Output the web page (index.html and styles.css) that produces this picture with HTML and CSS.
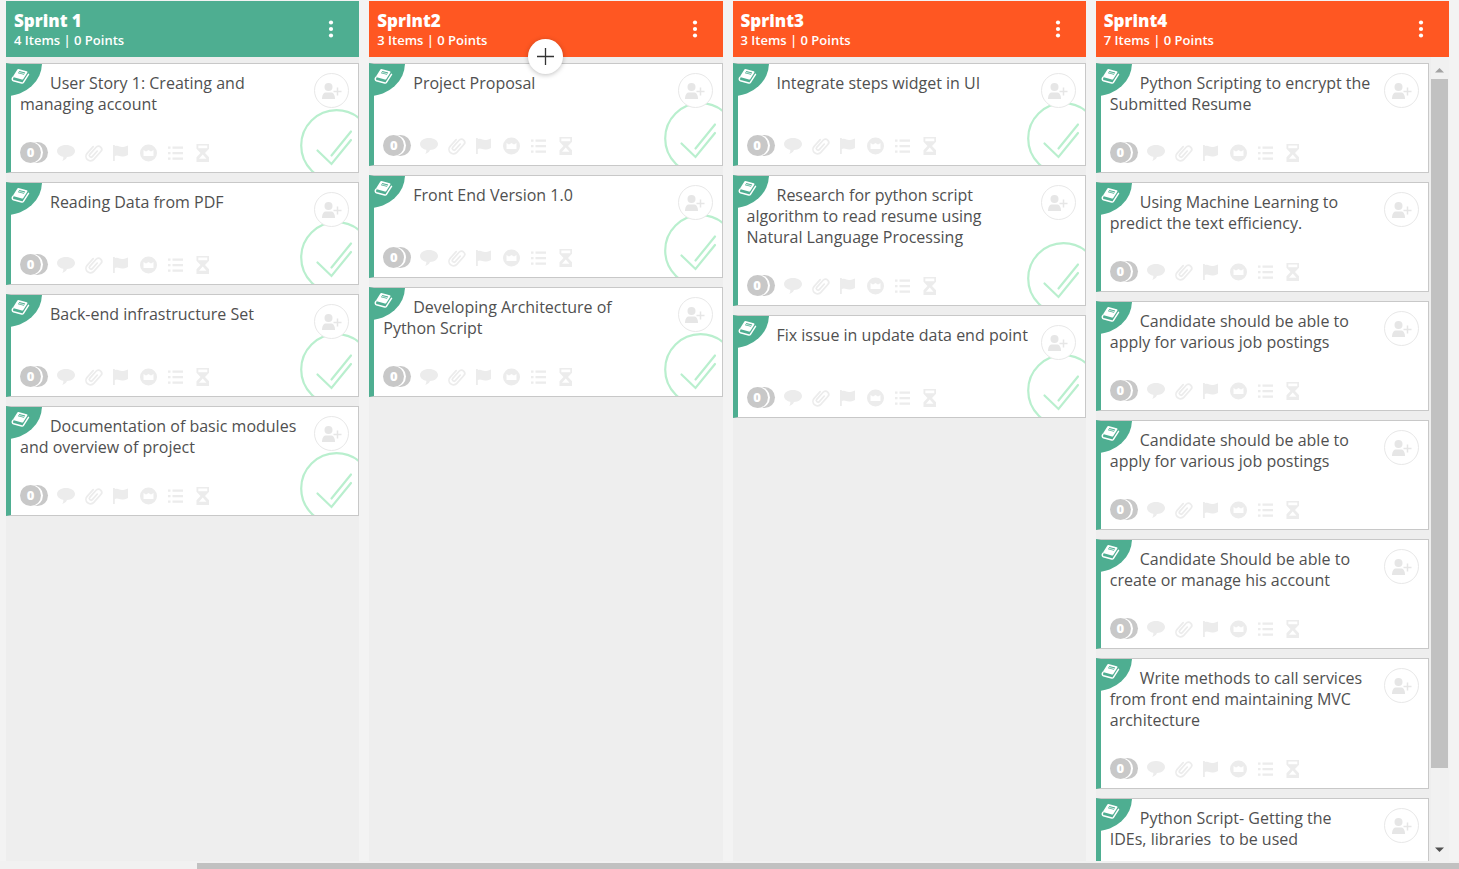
FILE: index.html
```html
<!DOCTYPE html>
<html lang="en">
<head>
<meta charset="utf-8">
<title>Sprint board</title>
<link rel="stylesheet" href="styles.css">
</head>
<body>
<svg class="defs" aria-hidden="true">
  <symbol id="book" viewBox="0 0 19 17">
    <path fill-rule="evenodd" d="M7.500 1 15.800 3.200Q17 3.600 16.300 4.700L12.300 11Q11.800 11.800 10.900 11.500L2.800 9.300Q1.600 8.900 2.300 7.900L6.200 1.700Q6.700.8 7.500 1zM8.300 3 7 5.200 12.900 6.800 14.200 4.600z" fill="#fff"/>
    <path d="M8 4.300 13.500 5.800" stroke="#fff" stroke-width=".7"/>
    <path d="M2 9.300C.8 10.500 1.200 12.400 2.400 12.800L10.800 15Q11.800 15.300 12.400 14.400L17.500 6.300" fill="none" stroke="#fff" stroke-width="1.500" stroke-linejoin="round" stroke-linecap="round"/>
  </symbol>
  <symbol id="dots" viewBox="0 0 6 18">
    <circle cx="3" cy="2.5" r="2.1"/><circle cx="3" cy="9" r="2.1"/><circle cx="3" cy="15.5" r="2.1"/>
  </symbol>
  <symbol id="member" viewBox="0 0 20 16">
    <circle cx="6.500" cy="4" r="4"/>
    <path d="M0 16c0-4.600 2-6.500 4-6.500h5c2 0 4 1.900 4 6.500z"/>
    <path d="M15.500 4.500v8M11.500 8.500h8" fill="none" stroke="currentColor" stroke-width="1.500"/>
  </symbol>
  <symbol id="tick" viewBox="0 0 73 73">
    <g fill="none" stroke="#b9efce" stroke-width="2.200" stroke-linecap="round">
      <circle cx="36.500" cy="36.500" r="35.300"/>
      <path d="M17.500 41.500 31.500 55 51 31M31.500 46.500 51 22.500"/>
    </g>
  </symbol>
  <symbol id="tools" viewBox="0 0 155 18">
    <path d="M9 1c5 0 9 2.600 9 6s-3.500 5.800-8 6c-.8 2-2.600 3.400-4.800 3.900.9-1.200 1.300-2.600 1.100-4.100C2.500 12 0 9.800 0 7c0-3.400 4-6 9-6z"/>
    <g transform="rotate(42 36.500 9)" fill="none" stroke="currentColor" stroke-width="1.700" stroke-linecap="round">
      <path d="M32 4.500V13.500a4.500 4.500 0 0 0 9 0V3a3.200 3.200 0 0 0-6.400 0V12.500a1.700 1.700 0 0 0 3.400 0V5"/>
    </g>
    <path d="M56 1h1.800v1.200c3-1.300 4.800.9 7 .9 1.800 0 3.200-.6 6.200-1.600v9.400c-2.500 1.100-4.300 1.700-6.200 1.600-2.600-.2-4.400-2-7-.5v5H56z"/>
    <path fill-rule="evenodd" d="M91.500.5a8.500 8.500 0 1 1 0 17 8.500 8.500 0 0 1 0-17zM86.500 6v6h10V6L94 7.600 91.500 6 89 7.600z"/>
    <path d="M111 2.500h2.500v2.200H111zm0 5.500h2.500v2.200H111zm0 5.500h2.500v2.200H111zm4.500-11H126v2.200h-10.500zm0 5.500H126v2.200h-10.500zm0 5.500H126v2.200h-10.500z"/>
    <path fill-rule="evenodd" d="M139.500 0h12.500v4.700L148 9l4 4.300V18h-12.500v-4.700L143.500 9l-4-4.300zM141.300 1.600v2.600h9V1.600zM145.700 10.500l-3.700 4.200h7.500z"/>
  </symbol>
</svg>

<main class="board">
  <section class="column">
    <header class="head head-done">
      <div><h2>Sprint 1</h2><p>4 Items | 0 Points</p></div>
      <button class="menu" aria-label="Sprint 1 menu"><svg><use href="#dots"/></svg></button>
    </header>
    <div class="list">
      <article class="card">
        <span class="corner"><svg><use href="#book"/></svg></span>
        <h3>User Story 1: Creating and managing account</h3>
        <svg class="tick"><use href="#tick"/></svg>
        <button class="member" aria-label="Add member"><svg><use href="#member"/></svg></button>
        <footer><span class="points">0</span><svg class="tools"><use href="#tools"/></svg></footer>
      </article>
      <article class="card">
        <span class="corner"><svg><use href="#book"/></svg></span>
        <h3>Reading Data from PDF</h3>
        <svg class="tick"><use href="#tick"/></svg>
        <button class="member" aria-label="Add member"><svg><use href="#member"/></svg></button>
        <footer><span class="points">0</span><svg class="tools"><use href="#tools"/></svg></footer>
      </article>
      <article class="card">
        <span class="corner"><svg><use href="#book"/></svg></span>
        <h3>Back-end infrastructure Set</h3>
        <svg class="tick"><use href="#tick"/></svg>
        <button class="member" aria-label="Add member"><svg><use href="#member"/></svg></button>
        <footer><span class="points">0</span><svg class="tools"><use href="#tools"/></svg></footer>
      </article>
      <article class="card">
        <span class="corner"><svg><use href="#book"/></svg></span>
        <h3>Documentation of basic modules and overview of project</h3>
        <svg class="tick"><use href="#tick"/></svg>
        <button class="member" aria-label="Add member"><svg><use href="#member"/></svg></button>
        <footer><span class="points">0</span><svg class="tools"><use href="#tools"/></svg></footer>
      </article>
    </div>
  </section>

  <section class="column">
    <header class="head">
      <div><h2>Sprint2</h2><p>3 Items | 0 Points</p></div>
      <button class="menu" aria-label="Sprint2 menu"><svg><use href="#dots"/></svg></button>
      <button class="add" aria-label="Add item"><svg viewBox="0 0 17 17"><path d="M8.500 0v17M0 8.500h17"/></svg></button>
    </header>
    <div class="list">
      <article class="card">
        <span class="corner"><svg><use href="#book"/></svg></span>
        <h3>Project Proposal</h3>
        <svg class="tick"><use href="#tick"/></svg>
        <button class="member" aria-label="Add member"><svg><use href="#member"/></svg></button>
        <footer><span class="points">0</span><svg class="tools"><use href="#tools"/></svg></footer>
      </article>
      <article class="card">
        <span class="corner"><svg><use href="#book"/></svg></span>
        <h3>Front End Version 1.0</h3>
        <svg class="tick"><use href="#tick"/></svg>
        <button class="member" aria-label="Add member"><svg><use href="#member"/></svg></button>
        <footer><span class="points">0</span><svg class="tools"><use href="#tools"/></svg></footer>
      </article>
      <article class="card">
        <span class="corner"><svg><use href="#book"/></svg></span>
        <h3>Developing Architecture of Python&nbsp;Script</h3>
        <svg class="tick"><use href="#tick"/></svg>
        <button class="member" aria-label="Add member"><svg><use href="#member"/></svg></button>
        <footer><span class="points">0</span><svg class="tools"><use href="#tools"/></svg></footer>
      </article>
    </div>
  </section>

  <section class="column">
    <header class="head">
      <div><h2>Sprint3</h2><p>3 Items | 0 Points</p></div>
      <button class="menu" aria-label="Sprint3 menu"><svg><use href="#dots"/></svg></button>
    </header>
    <div class="list">
      <article class="card">
        <span class="corner"><svg><use href="#book"/></svg></span>
        <h3>Integrate steps widget in UI</h3>
        <svg class="tick"><use href="#tick"/></svg>
        <button class="member" aria-label="Add member"><svg><use href="#member"/></svg></button>
        <footer><span class="points">0</span><svg class="tools"><use href="#tools"/></svg></footer>
      </article>
      <article class="card">
        <span class="corner"><svg><use href="#book"/></svg></span>
        <h3>Research for python script algorithm to read resume using Natural&nbsp;Language Processing</h3>
        <svg class="tick"><use href="#tick"/></svg>
        <button class="member" aria-label="Add member"><svg><use href="#member"/></svg></button>
        <footer><span class="points">0</span><svg class="tools"><use href="#tools"/></svg></footer>
      </article>
      <article class="card">
        <span class="corner"><svg><use href="#book"/></svg></span>
        <h3>Fix issue in update data end point</h3>
        <svg class="tick"><use href="#tick"/></svg>
        <button class="member" aria-label="Add member"><svg><use href="#member"/></svg></button>
        <footer><span class="points">0</span><svg class="tools"><use href="#tools"/></svg></footer>
      </article>
    </div>
  </section>

  <section class="column">
    <header class="head">
      <div><h2>Sprint4</h2><p>7 Items | 0 Points</p></div>
      <button class="menu" aria-label="Sprint4 menu"><svg><use href="#dots"/></svg></button>
    </header>
    <div class="scroller">
      <div class="list">
        <article class="card">
          <span class="corner"><svg><use href="#book"/></svg></span>
          <h3>Python Scripting to encrypt the Submitted Resume</h3>
          <button class="member" aria-label="Add member"><svg><use href="#member"/></svg></button>
          <footer><span class="points">0</span><svg class="tools"><use href="#tools"/></svg></footer>
        </article>
        <article class="card">
          <span class="corner"><svg><use href="#book"/></svg></span>
          <h3>Using Machine Learning to predict the text efficiency.</h3>
          <button class="member" aria-label="Add member"><svg><use href="#member"/></svg></button>
          <footer><span class="points">0</span><svg class="tools"><use href="#tools"/></svg></footer>
        </article>
        <article class="card">
          <span class="corner"><svg><use href="#book"/></svg></span>
          <h3>Candidate should be able to apply for various job postings</h3>
          <button class="member" aria-label="Add member"><svg><use href="#member"/></svg></button>
          <footer><span class="points">0</span><svg class="tools"><use href="#tools"/></svg></footer>
        </article>
        <article class="card">
          <span class="corner"><svg><use href="#book"/></svg></span>
          <h3>Candidate should be able to apply for various job postings</h3>
          <button class="member" aria-label="Add member"><svg><use href="#member"/></svg></button>
          <footer><span class="points">0</span><svg class="tools"><use href="#tools"/></svg></footer>
        </article>
        <article class="card">
          <span class="corner"><svg><use href="#book"/></svg></span>
          <h3>Candidate Should be able to create or manage his account</h3>
          <button class="member" aria-label="Add member"><svg><use href="#member"/></svg></button>
          <footer><span class="points">0</span><svg class="tools"><use href="#tools"/></svg></footer>
        </article>
        <article class="card">
          <span class="corner"><svg><use href="#book"/></svg></span>
          <h3>Write methods to call services from front end maintaining MVC architecture</h3>
          <button class="member" aria-label="Add member"><svg><use href="#member"/></svg></button>
          <footer><span class="points">0</span><svg class="tools"><use href="#tools"/></svg></footer>
        </article>
        <article class="card">
          <span class="corner"><svg><use href="#book"/></svg></span>
          <h3>Python Script- Getting the IDEs,&nbsp;libraries&nbsp; to be used</h3>
          <button class="member" aria-label="Add member"><svg><use href="#member"/></svg></button>
        </article>
      </div>
      <div class="vbar" aria-hidden="true">
        <svg viewBox="0 0 17 16"><path d="M4 9.500 8.500 5l4.500 4.500z" fill="#a3a3a3"/></svg>
        <div class="vtrack"><div class="vthumb"></div></div>
        <svg viewBox="0 0 17 16"><path d="M4 2.500 8.500 7 13 2.500z" fill="#505050"/></svg>
      </div>
    </div>
  </section>
</main>
<div class="hbar" aria-hidden="true"><div class="hthumb"></div></div>
</body>
</html>
```
FILE: styles.css
```css
* { box-sizing: border-box; }

body {
  margin: 0;
  height: 100vh;
  display: flex;
  flex-direction: column;
  overflow: hidden;
  background: #f3f3f3;
  color: #505050;
  font-family: "Open Sans", "Noto Sans", sans-serif;
}

h2, h3, p { margin: 0; }

button {
  padding: 0;
  border: 0;
  background: none;
  cursor: pointer;
}

svg { display: block; }

.defs {
  position: absolute;
  width: 0;
  height: 0;
}

.board {
  flex: 1;
  min-height: 0;
  display: grid;
  grid-template-columns: repeat(4, minmax(0, 1fr));
  grid-template-rows: minmax(0, 1fr);
  gap: 10px;
  padding: 1px 10px 0 6px;
}

.column {
  display: flex;
  flex-direction: column;
  min-height: 0;
  background: #eee;
}

.head {
  position: relative;
  display: flex;
  align-items: center;
  justify-content: space-between;
  height: 56px;
  flex: none;
  padding: 0 25px 0 8px;
  background: #ff5722;
  color: #fff;
}

.head-done { background: #4eae91; }

.head h2 {
  padding-top: 1px;
  font-size: 17px;
  line-height: 21px;
  font-weight: 800;
}

.head p {
  font-size: 13px;
  line-height: 18px;
  font-weight: 600;
}

.menu svg {
  width: 6px;
  height: 18px;
  fill: #fff;
}

.add {
  position: absolute;
  z-index: 2;
  left: 50%;
  bottom: -17px;
  width: 35px;
  height: 35px;
  margin-left: -18px;
  display: grid;
  place-items: center;
  border-radius: 50%;
  background: #fff;
  box-shadow: 0 1px 5px rgba(0, 0, 0, 0.25);
}

.add svg {
  width: 17px;
  height: 17px;
  fill: none;
  stroke: #333;
  stroke-width: 1.3;
}

.list {
  flex: 1;
  min-width: 0;
  min-height: 0;
  display: flex;
  flex-direction: column;
  gap: 9px;
  padding-top: 6px;
  overflow: hidden;
}

.card {
  position: relative;
  flex: none;
  display: flex;
  flex-direction: column;
  justify-content: space-between;
  gap: 27px;
  min-height: 103px;
  padding: 9px 50px 9px 9px;
  overflow: hidden;
  border: 1px solid #c8c8c8;
  border-left: 5px solid #4eae91;
  background: #fff;
}

.card h3 {
  font-size: 16px;
  line-height: 21px;
  font-weight: 400;
  text-indent: 30px;
}

.corner {
  position: absolute;
  left: -5px;
  top: -1px;
  width: 36px;
  height: 33px;
  padding: 5px 0 0 5px;
  border-bottom-right-radius: 100%;
  background: #4eae91;
}

.corner svg {
  width: 19px;
  height: 17px;
}

.tick {
  position: absolute;
  right: -15px;
  bottom: -10px;
  width: 73px;
  height: 73px;
}

.member {
  position: absolute;
  right: 9px;
  top: 9px;
  width: 35px;
  height: 35px;
  display: grid;
  place-items: center;
  border: 1px solid #e8e8e8;
  border-radius: 50%;
  background: #fff;
}

.member svg {
  width: 20px;
  height: 16px;
  color: #e6e6e6;
  fill: #e6e6e6;
}

.card footer {
  display: flex;
  align-items: center;
  gap: 16px;
}

.points {
  width: 21px;
  height: 21px;
  border-radius: 50%;
  background: #c8c8c8;
  box-shadow: 2px 0 0 #fff, 7px 0 0 #c8c8c8;
  color: #fff;
  font-size: 13px;
  line-height: 21px;
  font-weight: 800;
  text-align: center;
}

.tools {
  width: 155px;
  height: 18px;
  color: #ececec;
  fill: #ececec;
}

.scroller {
  flex: 1;
  min-height: 0;
  display: flex;
  gap: 2px;
}

.vbar {
  width: 18px;
  display: flex;
  flex-direction: column;
  padding: 6px 1px 0 0;
  background: #f1f1f1;
}

.vbar svg {
  flex: none;
  width: 17px;
  height: 16px;
}

.vtrack {
  flex: 1;
  min-height: 0;
}

.vthumb {
  height: 90%;
  background: #c1c1c1;
}

.hbar {
  flex: none;
  display: flex;
  justify-content: flex-end;
  padding-top: 2px;
  background: #f1f1f1;
}

.hthumb {
  width: 86.5%;
  height: 6px;
  background: #c1c1c1;
}
```
